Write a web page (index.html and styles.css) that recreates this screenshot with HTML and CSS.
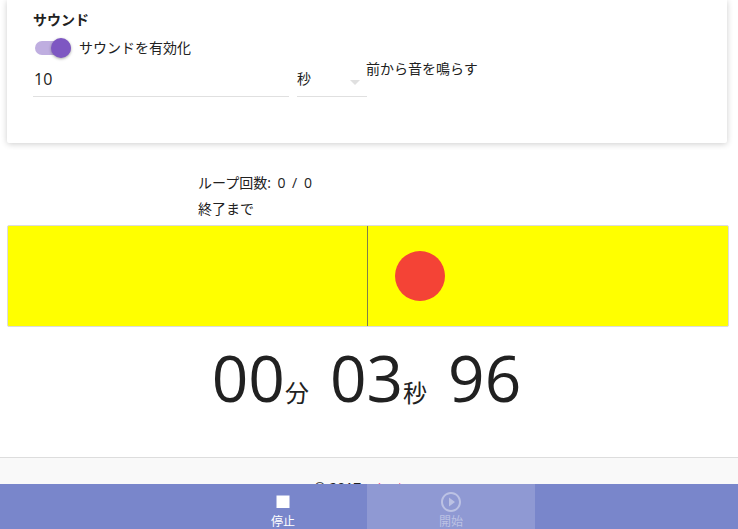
FILE: index.html
```html
<!DOCTYPE html>
<html lang="ja">
<head>
    <meta charset="UTF-8">
    <meta name="viewport" content="width=device-width, initial-scale=1.0">
    <title>タイマー</title>
    <link rel="stylesheet" href="styles.css">
</head>
<body>
    <div class="page">
        <!-- Sound settings card -->
        <div class="card">
            <div class="card-title">サウンド</div>
            <div class="toggle-row">
                <span class="toggle"><span class="toggle-thumb"></span></span>
                <span>サウンドを有効化</span>
            </div>
            <div class="lead-row">
                <div class="field field-number">10</div>
                <div class="field field-select">秒<span class="select-arrow"></span></div>
                <span class="lead-text">前から音を鳴らす</span>
            </div>
        </div>

        <div class="info">
            <div class="info-line info-count">ループ回数: 0 / 0</div>
            <div class="info-line">終了まで</div>
        </div>

        <!-- Beat bar -->
        <div class="beat-bar">
            <span class="beat-line"></span>
            <span class="beat-dot"></span>
        </div>

        <div class="timer">
            <div class="timer-part"><span class="timer-num">00</span><span class="timer-unit">分</span></div>
            <div class="timer-part"><span class="timer-num">03</span><span class="timer-unit">秒</span></div>
            <div class="timer-part"><span class="timer-num">96</span></div>
        </div>
    </div>

    <div class="footer"><span class="footer-text">© 2017 <span class="footer-link">minato</span></span></div>

    <!-- Bottom navigation -->
    <div class="bottom-nav">
        <div class="nav-btn">
            <svg class="nav-icon" viewBox="0 0 24 24"><path fill="#fff" d="M5.5 5.5h13v12.5h-13z"/></svg>
            <span class="nav-label">停止</span>
        </div>
        <div class="nav-btn nav-btn-disabled">
            <svg class="nav-icon" viewBox="0 0 24 24"><path fill="currentColor" d="M10 16.5l6-4.5-6-4.5v9zM12 2C6.48 2 2 6.48 2 12s4.48 10 10 10 10-4.48 10-10S17.52 2 12 2zm0 18c-4.41 0-8-3.59-8-8s3.59-8 8-8 8 3.59 8 8-3.59 8-8 8z"/></svg>
            <span class="nav-label">開始</span>
        </div>
    </div>
</body>
</html>
```

FILE: styles.css
```css
/* Main styling for the body */
html, body {
    height: 100%;
}

body {
    margin: 0;
    overflow: hidden;
    background-color: #fff;
    color: #212121;
    font-family: "Open Sans", "Noto Sans CJK JP", sans-serif;
    font-size: 14px;
}

.page {
    width: 735px;
}

/* Sound settings card */
.card {
    box-sizing: border-box;
    height: 143px;
    width: 720px;
    margin-left: 7px;
    padding: 10px 26px 0;
    background-color: #fff;
    border-radius: 0 0 2px 2px;
    box-shadow: 0 1px 6px rgba(0, 0, 0, 0.2);
}

.card-title {
    height: 20px;
    line-height: 20px;
    font-weight: bold;
}

.toggle-row {
    display: flex;
    align-items: center;
    gap: 8px;
    height: 20px;
    margin-top: 8px;
    line-height: 20px;
}

.toggle {
    position: relative;
    width: 36px;
    height: 14px;
    margin-left: 2px;
    border-radius: 7px;
    background-color: #bfaee0;
}

.toggle-thumb {
    position: absolute;
    top: -3px;
    right: 0;
    width: 20px;
    height: 20px;
    border-radius: 50%;
    background-color: #7e57c2;
    box-shadow: 0 1px 3px rgba(0, 0, 0, 0.35);
}

.lead-row {
    display: flex;
    align-items: flex-start;
    margin-top: 2px;
}

.field {
    box-sizing: border-box;
    height: 37px;
    line-height: 38px;
    border-bottom: 1px solid #e0e0e0;
}

.field-number {
    width: 256px;
    padding-left: 1px;
    font-size: 16px;
}

.field-select {
    position: relative;
    width: 70px;
    margin-left: 8px;
}

.select-arrow {
    position: absolute;
    top: 20px;
    left: 53px;
    border-top: 5px solid #e0e0e0;
    border-left: 5px solid transparent;
    border-right: 5px solid transparent;
}

.lead-text {
    margin: -1px 0 0 -1px;
    line-height: 20px;
}

/* Loop info */
.info {
    margin-top: 27px;
    padding-left: 198px;
}

.info-line {
    height: 26px;
    line-height: 26px;
}

.info-count {
    word-spacing: 3px;
}

/* Beat bar */
.beat-bar {
    position: relative;
    box-sizing: border-box;
    height: 102px;
    width: 722px;
    margin: 3px 0 0 7px;
    background-color: #ff0;
    border: 1px solid #dcdcdc;
    border-radius: 2px;
}

.beat-line {
    position: absolute;
    top: 0;
    bottom: 0;
    left: 359px;
    width: 1px;
    background-color: #80804a;
}

.beat-dot {
    position: absolute;
    top: 25px;
    left: 387px;
    width: 50px;
    height: 50px;
    border-radius: 50%;
    background-color: #f44336;
}

/* Timer display */
.timer {
    display: flex;
    justify-content: center;
    gap: 21px;
    height: 131px;
    line-height: 108px;
    margin-top: -3px;
    margin-bottom: 3px;
    padding-right: 2px;
    white-space: nowrap;
}

.timer-num {
    font-size: 64px;
}

.timer-unit {
    font-size: 24px;
}

/* Footer, mostly hidden by the nav */
.footer {
    box-sizing: border-box;
    height: 72px;
    margin-top: -1px;
    padding: 20px 3px 0 0;
    line-height: 20px;
    text-align: center;
    background-color: #f9f9f9;
    border-top: 1px solid #ddd;
}

.footer-text {
    margin-left: -10px;
}

.footer-link {
    color: #ff4081;
}

/* Bottom navigation */
.bottom-nav {
    position: fixed;
    left: 0;
    right: 0;
    bottom: 0;
    display: flex;
    justify-content: center;
    height: 45px;
    padding-right: 4px;
    overflow: hidden;
    background-color: #7986cb;
}

.nav-btn {
    display: flex;
    flex-direction: column;
    align-items: center;
    width: 168px;
    padding-top: 6px;
    color: #fff;
    font-size: 12px;
}

.nav-label {
    margin-top: 1px;
    line-height: 14px;
}

.nav-btn-disabled {
    background-color: #8f99d3;
    color: #bcc2e4;
}

.nav-icon {
    flex: none;
    width: 24px;
    height: 24px;
}
```
